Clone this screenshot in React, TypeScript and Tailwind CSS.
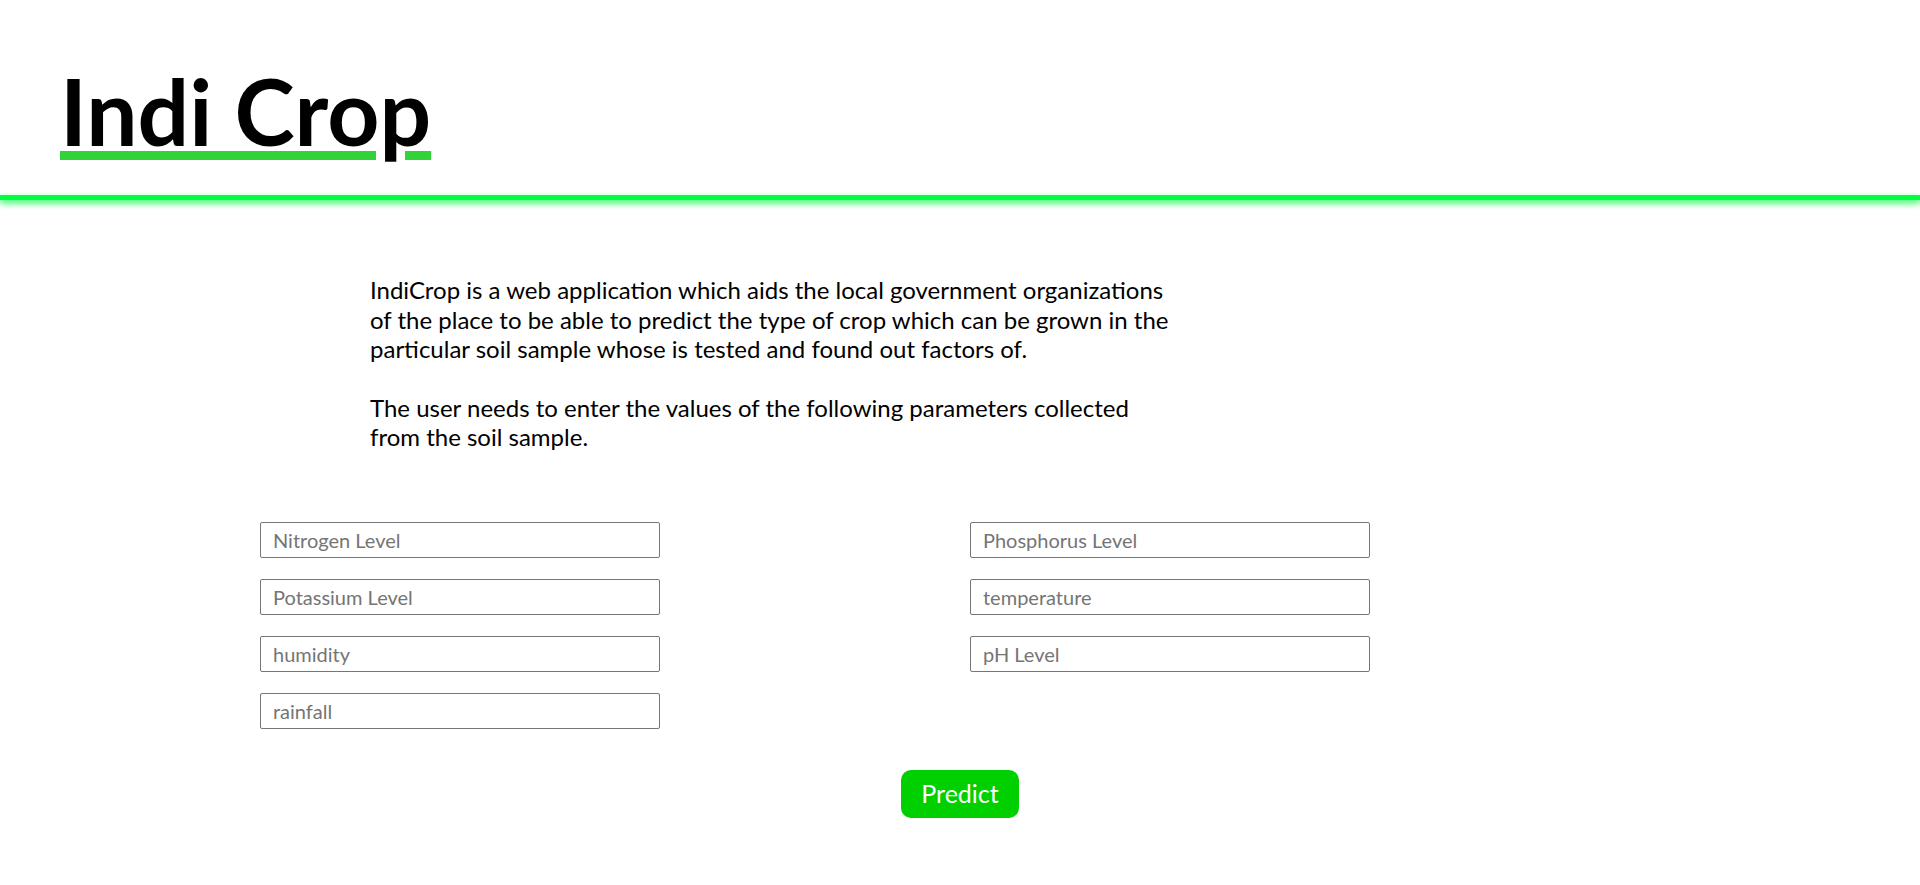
const fields = [
  ["Nitrogen Level", "Phosphorus Level"],
  ["Potassium Level", "temperature"],
  ["humidity", "pH Level"],
  ["rainfall", null],
];

function Field({ label }: { label: string }) {
  return (
    <input
      type="text"
      placeholder={label}
      className="h-[36px] w-[400px] rounded-[2px] border border-[#767676] bg-white px-[12px] text-[20px] text-black outline-none placeholder:text-[#757575]"
    />
  );
}

export default function App() {
  return (
    <div className="min-h-screen bg-white font-['Lato','Liberation_Sans',sans-serif] text-black">
      {/* Header */}
      <header className="pt-[56px]">
        <h1 className="pl-[60px] pb-[30px] text-[91px] font-bold leading-[1.2]">
          <span className="underline decoration-[#32d23a] decoration-[9px] underline-offset-[5px]">
            Indi Crop
          </span>
        </h1>
        <div className="h-[5px] bg-[#00ff40] shadow-[0_3px_6px_#00ff40]" />
      </header>

      {/* Intro */}
      <section className="pt-[75px] pl-[370px]">
        <p className="w-[800px] text-[24px] leading-[29.4px]">
          IndiCrop is a web application which aids the local government organizations of the place to be able to predict the type of crop which can be grown in the particular soil sample whose is tested and found out factors of.
          <br />
          <br />
          The user needs to enter the values of the following parameters collected from the soil sample.
        </p>
      </section>

      {/* Form */}
      <form className="pt-[70px]" onSubmit={(e) => e.preventDefault()}>
        <div className="grid grid-cols-[710px_400px] gap-y-[21px] pl-[260px]">
          {fields.map(([a, b]) => (
            <>
              <Field key={a} label={a as string} />
              {b ? <Field key={b} label={b} /> : <div key={a + "-empty"} />}
            </>
          ))}
        </div>
        <div className="flex justify-center pt-[41px]">
          <button
            type="submit"
            className="h-[48px] rounded-[10px] bg-[#00d000] px-[20px] text-[25px] text-white"
          >
            Predict
          </button>
        </div>
      </form>
    </div>
  );
}
